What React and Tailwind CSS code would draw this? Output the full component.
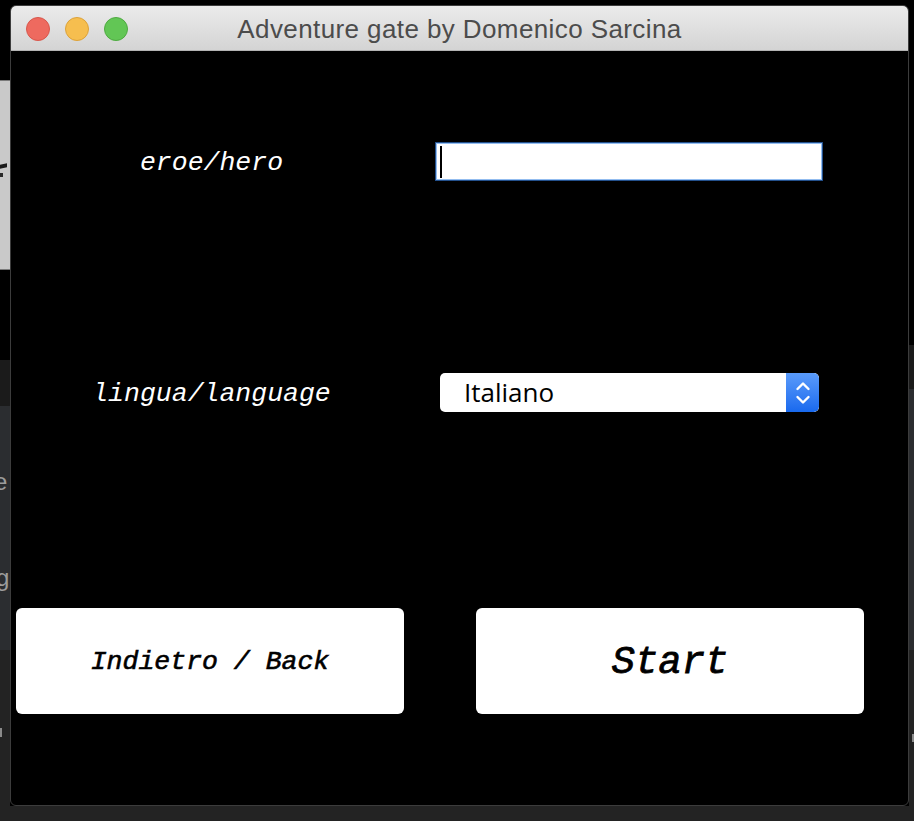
import React from "react";

function Chevrons() {
  return (
    <svg width="16" height="30" viewBox="0 0 16 30" fill="none">
      <path d="M2.5 11 L8 5.5 L13.5 11" stroke="white" strokeWidth="2.4" strokeLinecap="round" strokeLinejoin="round" />
      <path d="M2.5 19 L8 24.5 L13.5 19" stroke="white" strokeWidth="2.4" strokeLinecap="round" strokeLinejoin="round" />
    </svg>
  );
}

export default function App() {
  const mono = { fontFamily: '"Liberation Mono", "Courier New", monospace' };
  return (
    <div className="relative w-[914px] h-[821px] overflow-hidden bg-black">
      {/* desktop: other windows peeking out */}
      <div className="absolute left-0 top-[80px] w-[10px] h-[190px] bg-[#c9c9c9] border-y border-[#7a7a7a]">
        <div className="absolute left-0 top-[83px] w-[7px] h-[4px] bg-[#1a1a1a] -skew-y-12" />
        <div className="absolute left-0 top-[92px] w-[3px] h-[4px] bg-[#2a2a2a]" />
      </div>
      <div className="absolute left-0 top-[360px] w-[10px] h-[46px] bg-[#1b1b1b]" />
      <div className="absolute left-0 top-[406px] w-[10px] h-[244px] bg-[#2b2d30] overflow-hidden" style={{ fontFamily: '"Liberation Sans", Arial, sans-serif' }}>
        <div className="absolute left-[-6px] top-[64px] text-[24px] leading-none text-[#9c9c9c]">e</div>
        <div className="absolute left-[-4px] top-[160px] text-[24px] leading-none text-[#9c9c9c]">g</div>
      </div>
      <div className="absolute left-0 top-[650px] w-[10px] h-[171px] bg-[#232323]">
        <div className="absolute left-0 top-[78px] w-[2px] h-[9px] bg-[#8a8a8a]" />
      </div>
      <div className="absolute right-0 top-[345px] w-[5px] h-[44px] bg-[#1b1b1b]" />
      <div className="absolute right-0 top-[389px] w-[5px] h-[261px] bg-[#2b2d30]" />
      <div className="absolute right-0 top-[650px] w-[5px] h-[171px] bg-[#232323]">
        <div className="absolute right-0 top-[84px] w-[2px] h-[8px] bg-[#8a8a8a]" />
      </div>
      <div className="absolute left-0 top-[806px] w-full h-[15px] bg-[#232323]" />

      {/* window */}
      <div className="absolute left-[10px] top-[5px] w-[899px] h-[801px] rounded-[6px] overflow-hidden flex flex-col border border-[#3c3c3c] bg-black">
        {/* title bar */}
        <div className="relative h-[45px] shrink-0 flex items-center bg-gradient-to-b from-[#ebebeb] to-[#d4d4d4] border-b border-[#b3b3b3]">
          <div className="flex items-center gap-[15px] pl-[15px] pt-[1px]">
            <div className="w-[24px] h-[24px] rounded-full bg-[#ee6a5f] border border-[#d8574c]" />
            <div className="w-[24px] h-[24px] rounded-full bg-[#f6be4f] border border-[#dca23a]" />
            <div className="w-[24px] h-[24px] rounded-full bg-[#62c655] border border-[#4eaa41]" />
          </div>
          <div
            className="absolute inset-0 pt-[3px] flex items-center justify-center text-[26px] tracking-[0.4px] text-[#4c4c4c]"
            style={{ fontFamily: '"Liberation Sans", Arial, sans-serif' }}
          >
            Adventure gate by Domenico Sarcina
          </div>
        </div>

        {/* content */}
        <div className="flex-1 flex flex-col pt-[91px]">
          <div className="flex items-center h-[39px]">
            <div className="w-[401px] pt-[4px] text-center text-[26.5px] italic text-white leading-none" style={mono}>
              eroe/hero
            </div>
            <div className="ml-[23px] w-[388px] h-[39px] bg-white border border-[#23508c] shadow-[inset_0_0_0_1px_#93bdf0] relative">
              <div className="absolute left-[4px] top-[3px] w-[2px] h-[32px] bg-black" />
            </div>
          </div>

          <div className="flex items-center h-[39px] mt-[192px]">
            <div className="w-[401px] pt-[4px] text-center text-[26.5px] italic text-white leading-none" style={mono}>
              lingua/language
            </div>
            <div className="ml-[28px] w-[379px] h-[39px] bg-white rounded-[5px] flex items-center overflow-hidden">
              <div
                className="flex-1 pl-[24px] pb-[1px] text-[26px] leading-none text-black"
                style={{ fontFamily: '"Open Sans", "Noto Sans", sans-serif' }}
              >
                Italiano
              </div>
              <div className="w-[33px] h-full flex items-center justify-center bg-gradient-to-b from-[#5a9bfa] to-[#1869ee] rounded-r-[5px]">
                <Chevrons />
              </div>
            </div>
          </div>

          <div className="flex mt-[196px] pl-[5px] gap-[72px]">
            <div className="w-[388px] h-[106px] bg-white rounded-[6px] flex items-center justify-center">
              <span className="pt-[3px] text-[26.5px] italic text-black leading-none [-webkit-text-stroke:0.6px_black]" style={mono}>
                Indietro / Back
              </span>
            </div>
            <div className="w-[388px] h-[106px] bg-white rounded-[6px] flex items-center justify-center">
              <span className="pt-[4px] text-[39px] italic text-black leading-none [-webkit-text-stroke:0.8px_black]" style={mono}>
                Start
              </span>
            </div>
          </div>
        </div>
      </div>
    </div>
  );
}
